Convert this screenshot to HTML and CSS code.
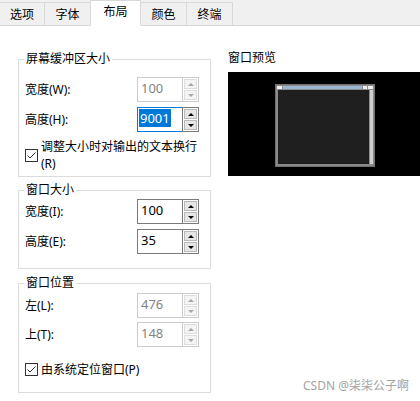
FILE: index.html
```html
<!DOCTYPE html>
<html>
<head>
<meta charset="utf-8">
<link rel="stylesheet" href="styles.css">
</head>
<body>
<div class="page">
  <div class="tabs">
    <div class="tab">选项</div>
    <div class="tab">字体</div>
    <div class="tab active">布局</div>
    <div class="tab">颜色</div>
    <div class="tab">终端</div>
  </div>
  <div class="content">
    <div class="left">
      <fieldset class="group g1">
        <legend>屏幕缓冲区大小</legend>
        <div class="row">
          <span class="lbl">宽度(W):</span>
          <div class="spin disabled"><div class="edit">100</div><div class="arrows"><span class="btn"><i class="up"></i></span><span class="btn"><i class="down"></i></span></div></div>
        </div>
        <div class="row r2">
          <span class="lbl">高度(H):</span>
          <div class="spin focus"><div class="edit"><span class="sel">9001</span></div><div class="arrows"><span class="btn"><i class="up"></i></span><span class="btn"><i class="down"></i></span></div></div>
        </div>
        <div class="check c1">
          <svg class="box" width="13" height="13" viewBox="0 0 13 13"><rect x="0.5" y="0.5" width="12" height="12" fill="#fff" stroke="#333"/><path d="M2.5 6.5 L5 9 L10.5 3.5" fill="none" stroke="#333" stroke-width="1"/></svg>
          <span class="ctext">调整大小时对输出的文本换行<br>(R)</span>
        </div>
      </fieldset>
      <fieldset class="group g2">
        <legend>窗口大小</legend>
        <div class="row">
          <span class="lbl">宽度(I):</span>
          <div class="spin"><div class="edit">100</div><div class="arrows"><span class="btn"><i class="up"></i></span><span class="btn"><i class="down"></i></span></div></div>
        </div>
        <div class="row r2">
          <span class="lbl">高度(E):</span>
          <div class="spin"><div class="edit">35</div><div class="arrows"><span class="btn"><i class="up"></i></span><span class="btn"><i class="down"></i></span></div></div>
        </div>
      </fieldset>
      <fieldset class="group g3">
        <legend>窗口位置</legend>
        <div class="row">
          <span class="lbl">左(L):</span>
          <div class="spin disabled"><div class="edit">476</div><div class="arrows"><span class="btn"><i class="up"></i></span><span class="btn"><i class="down"></i></span></div></div>
        </div>
        <div class="row r3">
          <span class="lbl">上(T):</span>
          <div class="spin disabled"><div class="edit">148</div><div class="arrows"><span class="btn"><i class="up"></i></span><span class="btn"><i class="down"></i></span></div></div>
        </div>
        <div class="check c2">
          <svg class="box" width="13" height="13" viewBox="0 0 13 13"><rect x="0.5" y="0.5" width="12" height="12" fill="#fff" stroke="#333"/><path d="M2.5 6.5 L5 9 L10.5 3.5" fill="none" stroke="#333" stroke-width="1"/></svg>
          <span class="ctext">由系统定位窗口(P)</span>
        </div>
      </fieldset>
    </div>
    <div class="right">
      <div class="ptitle">窗口预览</div>
      <div class="preview">
        <svg width="100" height="83" viewBox="0 0 100 83">
          <rect x="0" y="0" width="100" height="83" fill="#6f6f6f"/>
          <rect x="1" y="1" width="98" height="81" fill="#8a8a8a"/>
          <rect x="2" y="2" width="5" height="3" fill="#eeeeee"/>
          <rect x="8" y="2" width="79" height="3" fill="#9cb5d0"/>
          <rect x="88" y="2" width="4" height="3" fill="#eeeeee"/>
          <rect x="93" y="2" width="5" height="3" fill="#eeeeee"/>
          <rect x="3" y="6" width="91" height="74" fill="#1f1f1f"/>
          <rect x="95" y="6" width="3" height="74" fill="#cfcfcf"/>
        </svg>
      </div>
    </div>
  </div>
  <div class="mark">CSDN @柒柒公子啊</div>
</div>
</body>
</html>
```

FILE: styles.css
```css
* { box-sizing: border-box; }
html, body { margin: 0; padding: 0; }
body {
  width: 420px;
  height: 401px;
  overflow: hidden;
  background: #fff;
  font-family: "Noto Sans", "Noto Sans CJK SC", sans-serif;
  font-size: 12px;
  color: #000;
}
.page { position: relative; width: 420px; height: 401px; }

.tabs {
  display: flex;
  align-items: flex-end;
  height: 26px;
  background: #f0f0f0;
  border-bottom: 1px solid #d9d9d9;
}
.tab {
  width: 46px;
  height: 24px;
  margin-bottom: -1px;
  border: 1px solid #d9d9d9;
  border-left: none;
  background: #f0f0f0;
  display: flex;
  align-items: center;
  justify-content: center;
  line-height: 16px;
  padding-top: 1px;
}
.tab:first-child { width: 45px; border-left: none; }
.tab.active {
  width: 51px;
  height: 26px;
  background: #fff;
  border-bottom-color: #fff;
  margin-left: -1px;
  border-left: 1px solid #d9d9d9;
  padding-top: 0;
  padding-bottom: 2px;
}

.content { display: flex; }
.left {
  width: 193px;
  margin-left: 18px;
  padding-top: 25px;
  display: flex;
  flex-direction: column;
}
.group {
  margin: 0;
  border: 1px solid #dcdcdc;
  padding: 0 11px 0 6px;
  min-width: 0;
}
.group legend {
  padding: 0 2px;
  margin-left: -1px;
  line-height: 16px;
  height: 16px;
}
.g1 { padding-top: 10px; padding-bottom: 4px; }
.g2 { margin-top: 5px; padding-top: 1px; padding-bottom: 14px; }
.g3 { margin-top: 6px; padding-top: 2px; padding-bottom: 14px; }

.row {
  display: flex;
  align-items: center;
  justify-content: space-between;
  height: 25px;
}
.r2 { margin-top: 5px; }
.r3 { margin-top: 4px; }
.lbl { line-height: 16px; padding-top: 1px; }

.spin { display: flex; height: 25px; width: 62px; }
.edit {
  width: 45px;
  height: 25px;
  border: 1px solid #7a7a7a;
  border-right: none;
  padding: 0 0 0 3px;
  font-size: 13px;
  line-height: 21px;
  color: #000;
}
.arrows {
  width: 17px;
  height: 25px;
  border: 1px solid #7a7a7a;
  display: flex;
  flex-direction: column;
  padding: 1px;
  gap: 1px;
  background: #fff;
}
.btn {
  flex: 1;
  background: #e6e6e6;
  border: 1px solid #b9b9b9;
  display: flex;
  align-items: center;
  justify-content: center;
}
.up, .down { display: block; width: 0; height: 0; border-left: 3px solid transparent; border-right: 3px solid transparent; }
.up { border-bottom: 3px solid #000; }
.down { border-top: 3px solid #000; }

.spin.focus .edit { border-color: #0078d7; border-right: 1px solid #0078d7; width: 46px; margin-right: -1px; padding-left: 1px; }
.sel { background: #0078d7; color: #fff; display: inline-block; line-height: 18px; padding: 0 1px; margin-top: 1px; }

.spin.disabled .edit { border-color: #cccccc; color: #838383; }
.spin.disabled .arrows { border-color: #cccccc; }
.spin.disabled .btn { background: #f4f4f4; border-color: #dedede; }
.spin.disabled .up { border-bottom-color: #a6a6a6; }
.spin.disabled .down { border-top-color: #a6a6a6; }

.check { display: flex; align-items: flex-start; gap: 3px; }
.check .box { flex: none; }
.ctext { line-height: 17px; }
.c1 { margin-top: 6px; }
.c1 .box { margin-top: 11px; }
.c2 { margin-top: 14px; align-items: center; }

.right { margin-left: 17px; padding-top: 24px; flex: 1; }
.ptitle { line-height: 16px; }
.preview {
  margin-top: 6px;
  height: 104px;
  background: #000;
  padding: 12px 0 0 47px;
}
.preview svg { display: block; }

.mark {
  position: absolute;
  left: 303px;
  top: 378px;
  color: #a3a3a3;
  font-size: 12px;
  line-height: 16px;
}
```
